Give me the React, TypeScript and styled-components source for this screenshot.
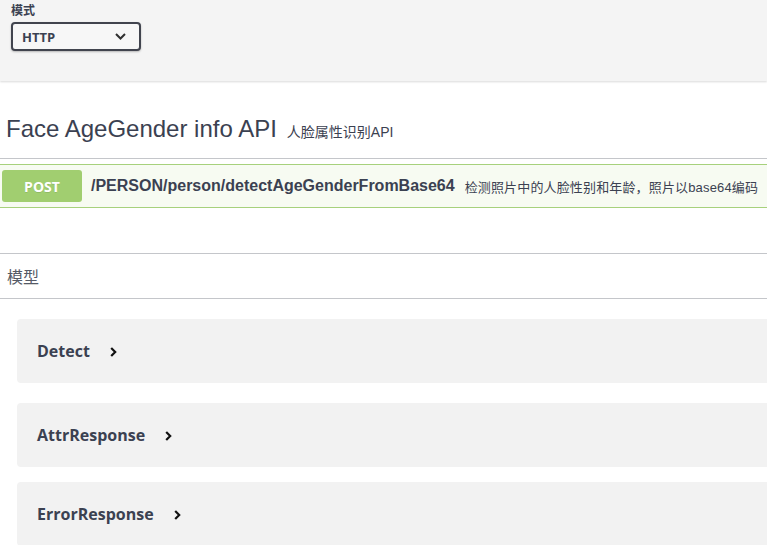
import React from "react";
import styled, { createGlobalStyle } from "styled-components";

const Global = createGlobalStyle`
  html, body { margin: 0; padding: 0; background: #fff; overflow: hidden; }
  body { font-family: "Open Sans", "Noto Sans CJK SC", sans-serif; color: #3b4151; }
  * { box-sizing: border-box; }
`;

const CJK = `"Noto Sans CJK SC", sans-serif`;

const Page = styled.div`
  width: 100%;
  min-height: 545px;
`;

const SchemeBar = styled.div`
  height: 81px;
  background: #f4f4f4;
  box-shadow: 0 1px 2px rgba(0, 0, 0, 0.15);
  padding: 3px 11px 0;
  display: flex;
  flex-direction: column;
  align-items: flex-start;
`;

const SchemeLabel = styled.span`
  font-family: "Liberation Sans", ${CJK};
  font-size: 12px;
  font-weight: 700;
  line-height: 16px;
  color: #3b4151;
`;

const Select = styled.div`
  margin-top: 3px;
  width: 130px;
  height: 29px;
  border: 2px solid #41444e;
  border-radius: 4px;
  background: #f7f7f7;
  box-shadow: 0 1px 2px rgba(0, 0, 0, 0.25);
  display: flex;
  align-items: center;
  justify-content: space-between;
  padding: 0 13px 0 9px;
  font-family: "Open Sans", sans-serif;
  font-size: 13px;
  font-weight: 700;
  color: #3b4151;
`;

const TagHeader = styled.div`
  display: flex;
  align-items: baseline;
  padding: 33px 0 14px 6px;
  border-bottom: 1px solid rgba(59, 65, 81, 0.3);
`;

const Title = styled.span`
  font-family: "Liberation Sans", Arial, sans-serif;
  font-size: 24px;
  line-height: 30px;
  color: #3b4151;
`;

const SubTitle = styled.span`
  margin-left: 10px;
  font-family: "Liberation Sans", ${CJK};
  font-size: 14px;
  color: #3b4151;
`;

const OpBlock = styled.div`
  margin: 5px -12px 0 0;
  border: 1px solid #a7d17c;
  border-left: none;
  background: #f7fbf2;
  padding: 5px 0 5px 2px;
  display: flex;
  align-items: center;
`;

const Method = styled.span`
  width: 80px;
  height: 32px;
  border-radius: 3px;
  background: #a1ce70;
  color: #fff;
  font-family: "Open Sans", sans-serif;
  font-size: 14px;
  font-weight: 700;
  display: flex;
  align-items: center;
  justify-content: center;
  text-shadow: 0 1px 0 rgba(0, 0, 0, 0.1);
`;

const Path = styled.span`
  margin-left: 9px;
  font-family: "Liberation Sans", Arial, sans-serif;
  font-size: 16px;
  font-weight: 700;
  color: #3b4151;
`;

const Desc = styled.span`
  margin-left: 10px;
  font-family: "Liberation Sans", ${CJK};
  font-size: 13px;
  letter-spacing: 0.15px;
  color: #3b4151;
  white-space: nowrap;
`;

const Models = styled.section`
  margin-top: 45px;
  border-top: 1px solid rgba(59, 65, 81, 0.3);
`;

const ModelsHeading = styled.h4`
  margin: 0;
  height: 45px;
  padding-left: 7px;
  display: flex;
  align-items: center;
  border-bottom: 1px solid rgba(59, 65, 81, 0.3);
  font-family: ${CJK};
  font-size: 16px;
  font-weight: 400;
  color: #555a66;
`;

const ModelList = styled.div`
  padding-top: 20px;
`;

const ModelBox = styled.div<{ $gap: number }>`
  margin: 0 -20px ${(p) => p.$gap}px 17px;
  height: 64px;
  border-radius: 4px;
  background: #f2f2f2;
  padding-left: 20px;
  display: flex;
  align-items: center;
`;

const ModelTitle = styled.span`
  font-family: "Open Sans", sans-serif;
  font-size: 16px;
  font-weight: 700;
  color: #3b4151;
`;

const Toggle = styled.svg`
  margin-left: 20px;
  margin-top: 2px;
`;

const Chevron = () => (
  <Toggle width="7" height="10" viewBox="0 0 7 10">
    <polyline points="1.2,1 5.2,5 1.2,9" fill="none" stroke="#111" strokeWidth="2.2" />
  </Toggle>
);

export default function App() {
  const models: [string, number][] = [
    ["Detect", 20],
    ["AttrResponse", 15],
    ["ErrorResponse", 15],
  ];
  return (
    <Page>
      <Global />
      <SchemeBar>
        <SchemeLabel>模式</SchemeLabel>
        <Select>
          <span>HTTP</span>
          <svg width="11" height="7" viewBox="0 0 11 7">
            <polyline points="1,1 5.5,5.5 10,1" fill="none" stroke="#303030" strokeWidth="2" />
          </svg>
        </Select>
      </SchemeBar>
      <TagHeader>
        <Title>Face AgeGender info API</Title>
        <SubTitle>人脸属性识别API</SubTitle>
      </TagHeader>
      <OpBlock>
        <Method>POST</Method>
        <Path>/PERSON/person/detectAgeGenderFromBase64</Path>
        <Desc>检测照片中的人脸性别和年龄，照片以base64编码</Desc>
      </OpBlock>
      <Models>
        <ModelsHeading>模型</ModelsHeading>
        <ModelList>
          {models.map(([name, gap]) => (
            <ModelBox key={name} $gap={gap}>
              <ModelTitle>{name}</ModelTitle>
              <Chevron />
            </ModelBox>
          ))}
        </ModelList>
      </Models>
    </Page>
  );
}
